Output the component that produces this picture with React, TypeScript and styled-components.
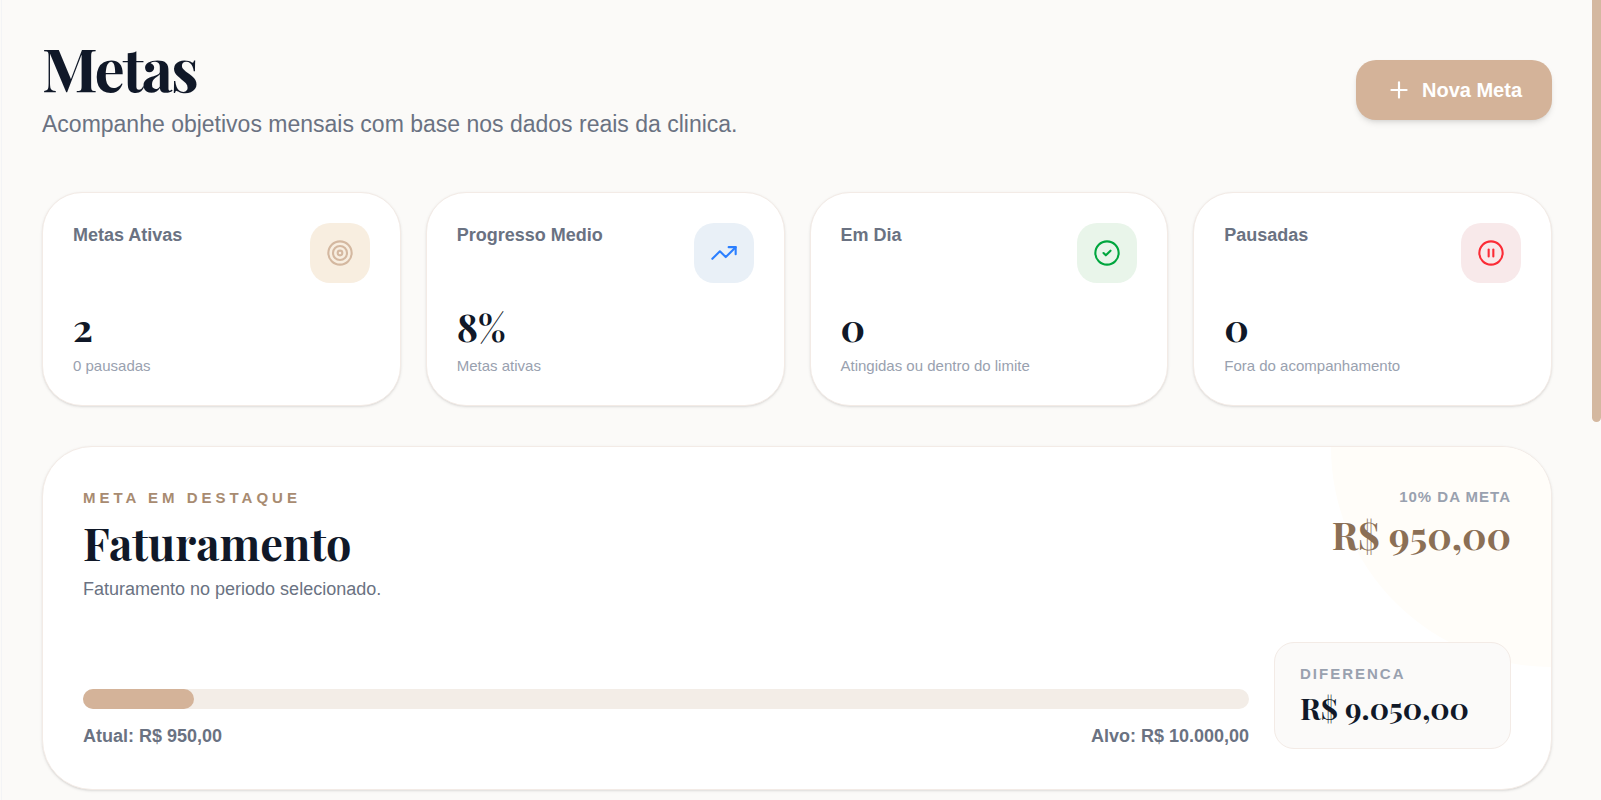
import React from 'react';
import styled, { createGlobalStyle } from 'styled-components';
import { CircleCheck, CirclePause, Plus, Target, TrendingUp, type LucideIcon } from 'lucide-react';

const serif = '"Playfair Display", "Liberation Serif", serif';

const GlobalStyle = createGlobalStyle`
  *, *::before, *::after { box-sizing: border-box; }
  body {
    margin: 0;
    background: #fbfaf8;
    color: #101828;
    font-family: Arial, "Liberation Sans", sans-serif;
  }
  h1, h2, h3, p, dl, dt, dd { margin: 0; }
`;

const Shell = styled.div`
  display: flex;
  height: 100vh;
  padding-left: 1px;
  overflow: hidden;
`;

const Main = styled.main`
  flex: 1;
  min-width: 0;
  padding: 40px;
  border-left: 1px solid #f3f4f6;
`;

const ScrollTrack = styled.div`
  flex: none;
  width: 9px;
`;

const ScrollThumb = styled.div`
  height: 52.75%;
  border-radius: 0 0 5px 5px;
  background: #d4b8a0;
`;

const Header = styled.header`
  display: flex;
  align-items: center;
  justify-content: space-between;
  margin-bottom: 52px;
`;

const PageTitle = styled.h1`
  font: 700 60px/54px ${serif};
  letter-spacing: -2px;
`;

const Lead = styled.p`
  margin-top: 14px;
  font-size: 23px;
  line-height: 32px;
  color: #6a7282;
`;

const PrimaryButton = styled.button`
  display: flex;
  align-items: center;
  gap: 10px;
  height: 60px;
  padding: 0 30px;
  border: 0;
  border-radius: 20px;
  background: #d4b399;
  color: #fff;
  font: 700 20px/30px Arial, "Liberation Sans", sans-serif;
  box-shadow: 0 4px 6px -1px rgba(0, 0, 0, 0.1), 0 2px 4px -2px rgba(0, 0, 0, 0.1);
  cursor: pointer;
`;

const StatGrid = styled.section`
  display: grid;
  grid-template-columns: repeat(4, 1fr);
  gap: 25px;
  margin-bottom: 40px;
`;

const Card = styled.article`
  border: 1px solid #f3ebe6;
  background: #fff;
  box-shadow: 0 1px 3px rgba(0, 0, 0, 0.1), 0 1px 2px -1px rgba(0, 0, 0, 0.1);
`;

const StatCard = styled(Card)`
  padding: 30px;
  border-radius: 40px;
`;

const StatTop = styled.div`
  display: flex;
  align-items: flex-start;
  justify-content: space-between;
  margin-bottom: 21px;
`;

const StatTitle = styled.h3`
  font-size: 18px;
  line-height: 25px;
  font-weight: 700;
  color: #6a7282;
`;

const IconTile = styled.span<{ $bg: string; $fg: string }>`
  display: grid;
  place-items: center;
  width: 60px;
  height: 60px;
  border-radius: 20px;
  background: ${(p) => p.$bg};
  color: ${(p) => p.$fg};
`;

const StatValue = styled.p`
  margin-bottom: 8px;
  font: 700 38px/45px ${serif};
`;

const StatNote = styled.p`
  font-size: 15px;
  line-height: 18px;
  color: #99a1af;
`;

const FeatureCard = styled(Card)`
  position: relative;
  overflow: hidden;
  padding: 40px;
  border-radius: 50px;
`;

const CornerGlow = styled.div`
  position: absolute;
  top: 0;
  right: 0;
  width: 220px;
  height: 220px;
  border-bottom-left-radius: 100%;
  background: #fffdf9;
`;

const FeatureTop = styled.div`
  position: relative;
  display: flex;
  justify-content: space-between;
  margin-bottom: 40px;
`;

const Eyebrow = styled.p`
  font-size: 15px;
  line-height: 22px;
  font-weight: 900;
  letter-spacing: 4px;
  text-transform: uppercase;
  color: #a88b71;
`;

const FeatureTitle = styled.h2`
  margin-top: 8px;
  font: 700 45px/50px ${serif};
`;

const FeatureText = styled.p`
  margin-top: 10px;
  font-size: 18px;
  line-height: 25px;
  color: #6a7282;
`;

const Result = styled.div`
  text-align: right;
`;

const ResultLabel = styled.p`
  font-size: 15px;
  line-height: 20px;
  font-weight: 700;
  letter-spacing: 1px;
  text-transform: uppercase;
  color: #99a1af;
`;

const ResultValue = styled.p`
  margin-top: 3px;
  font: 700 38px/50px ${serif};
  color: #8b6f55;
`;

const FeatureBottom = styled.div`
  position: relative;
  display: grid;
  grid-template-columns: 1fr 237px;
  gap: 25px;
  align-items: end;
`;

const Track = styled.div`
  height: 20px;
  border-radius: 10px;
  background: #f3ede7;
`;

const Fill = styled.div`
  height: 100%;
  border-radius: 10px;
  background: #d4b399;
`;

const Range = styled.div`
  display: flex;
  justify-content: space-between;
  margin-top: 15px;
  font-size: 18px;
  line-height: 25px;
  font-weight: 700;
  color: #6a7282;
`;

const DiffBox = styled.dl`
  padding: 20px 25px;
  border: 1px solid #f3ebe6;
  border-radius: 20px;
  background: #fbfaf9;
`;

const DiffLabel = styled.dt`
  font-size: 15px;
  line-height: 22px;
  font-weight: 900;
  letter-spacing: 2px;
  text-transform: uppercase;
  color: #99a1af;
`;

const DiffValue = styled.dd`
  margin-top: 3px;
  font: 700 30px/40px ${serif};
  white-space: nowrap;
`;

type Stat = { title: string; value: string; note: string; icon: LucideIcon; bg: string; fg: string };

const stats: Stat[] = [
  { title: 'Metas Ativas', value: '2', note: '0 pausadas', icon: Target, bg: '#f8eee0', fg: '#d4b8a0' },
  { title: 'Progresso Medio', value: '8%', note: 'Metas ativas', icon: TrendingUp, bg: '#e9f0f7', fg: '#2b7fff' },
  { title: 'Em Dia', value: '0', note: 'Atingidas ou dentro do limite', icon: CircleCheck, bg: '#e9f5ea', fg: '#00a63e' },
  { title: 'Pausadas', value: '0', note: 'Fora do acompanhamento', icon: CirclePause, bg: '#f8e9ea', fg: '#fb2c36' },
];

const goal = { current: 950, target: 10000 };

export default function App() {
  return (
    <>
      <GlobalStyle />
      <Shell>
        <Main>
          <Header>
            <div>
              <PageTitle>Metas</PageTitle>
              <Lead>Acompanhe objetivos mensais com base nos dados reais da clinica.</Lead>
            </div>
            <PrimaryButton type="button">
              <Plus size={26} aria-hidden />
              Nova Meta
            </PrimaryButton>
          </Header>

          <StatGrid>
            {stats.map(({ title, value, note, icon: Icon, bg, fg }) => (
              <StatCard key={title}>
                <StatTop>
                  <StatTitle>{title}</StatTitle>
                  <IconTile $bg={bg} $fg={fg}>
                    <Icon size={28} strokeWidth={1.8} aria-hidden />
                  </IconTile>
                </StatTop>
                <StatValue>{value}</StatValue>
                <StatNote>{note}</StatNote>
              </StatCard>
            ))}
          </StatGrid>

          <FeatureCard>
            <CornerGlow />
            <FeatureTop>
              <div>
                <Eyebrow>Meta em destaque</Eyebrow>
                <FeatureTitle>Faturamento</FeatureTitle>
                <FeatureText>Faturamento no periodo selecionado.</FeatureText>
              </div>
              <Result>
                <ResultLabel>10% da meta</ResultLabel>
                <ResultValue>R$ 950,00</ResultValue>
              </Result>
            </FeatureTop>
            <FeatureBottom>
              <div>
                <Track>
                  <Fill style={{ width: `${(goal.current / goal.target) * 100}%` }} />
                </Track>
                <Range>
                  <span>Atual: R$ 950,00</span>
                  <span>Alvo: R$ 10.000,00</span>
                </Range>
              </div>
              <DiffBox>
                <DiffLabel>Diferenca</DiffLabel>
                <DiffValue>R$ 9.050,00</DiffValue>
              </DiffBox>
            </FeatureBottom>
          </FeatureCard>
        </Main>
        <ScrollTrack aria-hidden>
          <ScrollThumb />
        </ScrollTrack>
      </Shell>
    </>
  );
}
